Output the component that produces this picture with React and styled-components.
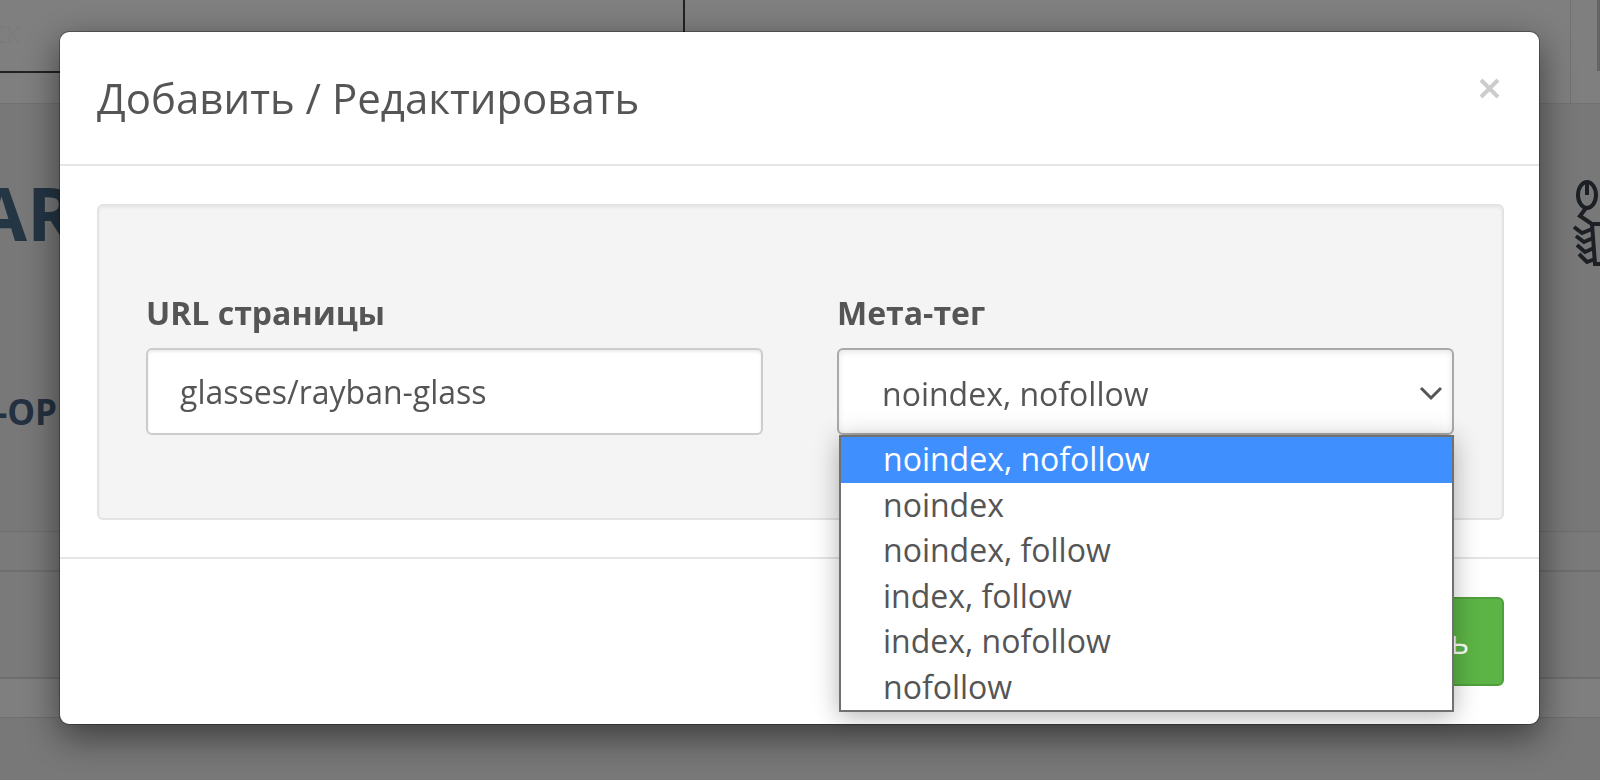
import React from "react";
import styled, { createGlobalStyle } from "styled-components";

const GlobalStyle = createGlobalStyle`
  * { box-sizing: border-box; }
  html, body, #root { height: 100%; }
  body {
    margin: 0;
    overflow: hidden;
    background: #f1f1f1;
    color: #555;
    font-family: "Open Sans", "Noto Sans", sans-serif;
    font-size: 32px;
  }
`;

const Page = styled.div`
  min-height: 100vh;
  overflow: hidden;
`;

const TopBar = styled.header`
  display: grid;
  grid-template-columns: 685fr 886fr 26px 3px;
  height: 104px;
  background: #fff;
  border-bottom: 1px solid #e2e2e2;
`;

const SearchCell = styled.div`
  height: 73px;
  padding-top: 18px;
  border-right: 2px solid #444;
  border-bottom: 2px solid #444;
  color: #f7f7f7;
  font-size: 23px;
  line-height: 32px;
`;

const SearchText = styled.span`
  margin-left: -8px;
`;

const MenuCell = styled.div`
  border-right: 1px solid #e2e2e2;
`;

const AvatarCell = styled.div`
  grid-column: 4;
  height: 71px;
  background: #c8c8c8;
`;

const Hero = styled.div`
  display: flex;
  justify-content: space-between;
  align-items: flex-start;
  height: 264px;
  padding-top: 59px;
`;

const Brand = styled.h1`
  margin: 0 0 0 -24px;
  color: #486a88;
  font-size: 74px;
  line-height: 100px;
`;

const Subhead = styled.h2`
  height: 163px;
  margin: 0 0 0 -4px;
  padding-top: 20px;
  color: #486280;
  font-size: 35px;
  line-height: 48px;
`;

const Emblem = styled.svg`
  display: block;
  width: 30px;
  height: 90px;
  margin-top: 15px;
`;

const Band = styled.div`
  height: ${(p) => p.$height}px;
  background: ${(p) => p.$fill};
  border-top: ${(p) => p.$line}px solid #dcdcdc;
`;

const Backdrop = styled.div`
  position: fixed;
  inset: 0;
  padding: 31px 60px 0 59px;
  background: rgba(0, 0, 0, 0.5);
`;

const Dialog = styled.section`
  border: 1px solid rgba(0, 0, 0, 0.3);
  border-radius: 10px;
  background: #fff;
  background-clip: padding-box;
  box-shadow: 0 12px 36px rgba(0, 0, 0, 0.5);
`;

const DialogHeader = styled.header`
  display: flex;
  justify-content: space-between;
  align-items: flex-start;
  padding: 36px 37px;
  border-bottom: 2px solid #e5e5e5;
`;

const Title = styled.h3`
  margin: 0;
  font-size: 42px;
  font-weight: 400;
  line-height: 60px;
`;

const CloseButton = styled.button`
  width: 24px;
  height: 40px;
  padding: 0;
  border: 0;
  background: none;
`;

const CloseIcon = styled.svg`
  display: block;
`;

const DialogBody = styled.div`
  padding: 38px 35px 37px 37px;
`;

const Well = styled.div`
  display: grid;
  grid-template-columns: 1fr 1fr;
  gap: 74px;
  padding: 83px 48px 83px 47px;
  border: 2px solid #e3e3e3;
  border-radius: 6px;
  background: #f4f4f4;
  box-shadow: inset 0 2px 3px rgba(0, 0, 0, 0.05);
`;

const Field = styled.div`
  position: relative;
`;

const Label = styled.label`
  display: block;
  margin-bottom: 11px;
  font-size: 32px;
  font-weight: 700;
  line-height: 48px;
`;

const TextInput = styled.input`
  display: block;
  width: 100%;
  height: 87px;
  padding: 0 32px;
  border: 2px solid #ccc;
  border-radius: 6px;
  background: #fff;
  box-shadow: inset 0 2px 3px rgba(0, 0, 0, 0.08);
  color: #555;
  font: inherit;
  outline: 0;
`;

const Select = styled.select`
  display: block;
  width: 100%;
  height: 87px;
  padding: 4px 43px 0;
  appearance: none;
  border: 2px solid #a9a9a9;
  border-radius: 6px;
  background: #fff;
  box-shadow: inset 0 2px 6px rgba(0, 0, 0, 0.1);
  color: #555;
  font: inherit;
  outline: 0;
`;

const Chevron = styled.svg`
  position: absolute;
  right: 11px;
  bottom: 32px;
  pointer-events: none;
`;

const Options = styled.ul`
  position: absolute;
  z-index: 1;
  top: 100%;
  left: 2px;
  right: 0;
  display: grid;
  grid-template-rows: repeat(6, 1fr);
  height: 277px;
  margin: 0;
  padding: 0;
  border: 2px solid #707070;
  background: #fff;
  box-shadow: 0 4px 24px rgba(0, 0, 0, 0.3);
  list-style: none;
`;

const Option = styled.li`
  padding-left: 42px;
  background: ${(p) => (p.$active ? "#408fff" : "#fff")};
  color: ${(p) => (p.$active ? "#fff" : "#555")};
  line-height: 44px;
`;

const DialogFooter = styled.footer`
  display: flex;
  justify-content: flex-end;
  padding: 38px 35px;
  border-top: 2px solid #e5e5e5;
`;

const SaveButton = styled.button`
  height: 89px;
  padding: 0 33px;
  border: 2px solid #4f9f3c;
  border-radius: 6px;
  background: #5cb446;
  color: #fff;
  font: inherit;
`;

const values = [
  "noindex, nofollow",
  "noindex",
  "noindex, follow",
  "index, follow",
  "index, nofollow",
  "nofollow",
];

export default function App() {
  return (
    <>
      <GlobalStyle />
      <Page>
        <TopBar>
          <SearchCell><SearchText>СК</SearchText></SearchCell>
          <MenuCell />
          <AvatarCell />
        </TopBar>
        <Hero>
          <Brand>AR</Brand>
          <Emblem viewBox="0 0 30 90" fill="none" stroke="#384048" strokeWidth="4" aria-hidden="true">
            <ellipse cx="17" cy="17" rx="9" ry="13" />
            <path d="M17 4v13M16 30l-6 8 12 8M30 46h-8l3 40h6" />
            <path d="M4 49l8 6 10-4M6 58l8 6 9-4M7 67l8 7 9-4M9 76l8 8 8-3" />
          </Emblem>
        </Hero>
        <Subhead>-OP</Subhead>
        <Band $height={39} $line={1} $fill="#f4f4f4" />
        <Band $height={107} $line={2} $fill="#f4f4f4" />
        <Band $height={40} $line={2} $fill="#fff" />
        <Band $height={63} $line={1} $fill="#f1f1f1" />
      </Page>
      <Backdrop>
        <Dialog role="dialog" aria-modal="true" aria-labelledby="dialog-title">
          <DialogHeader>
            <Title id="dialog-title">Добавить / Редактировать</Title>
            <CloseButton type="button" aria-label="Закрыть">
              <CloseIcon width="24" height="40" viewBox="0 0 24 40" fill="none" stroke="#ccc" strokeWidth="4">
                <path d="M3 12l17 17M20 12L3 29" />
              </CloseIcon>
            </CloseButton>
          </DialogHeader>
          <DialogBody>
            <Well>
              <Field>
                <Label htmlFor="page-url">URL страницы</Label>
                <TextInput id="page-url" type="text" defaultValue="glasses/rayban-glass" />
              </Field>
              <Field>
                <Label htmlFor="meta-tag">Мета-тег</Label>
                <Select id="meta-tag" defaultValue={values[0]}>
                  {values.map((v) => <option key={v}>{v}</option>)}
                </Select>
                <Chevron width="24" height="18" viewBox="0 0 24 18" fill="none" stroke="#555" strokeWidth="3">
                  <path d="M2 3l10 10L22 3" />
                </Chevron>
                <Options role="listbox" aria-label="Мета-тег">
                  {values.map((v, i) => (
                    <Option key={v} role="option" aria-selected={i === 0} $active={i === 0}>{v}</Option>
                  ))}
                </Options>
              </Field>
            </Well>
          </DialogBody>
          <DialogFooter>
            <SaveButton type="submit">Сохранить</SaveButton>
          </DialogFooter>
        </Dialog>
      </Backdrop>
    </>
  );
}
